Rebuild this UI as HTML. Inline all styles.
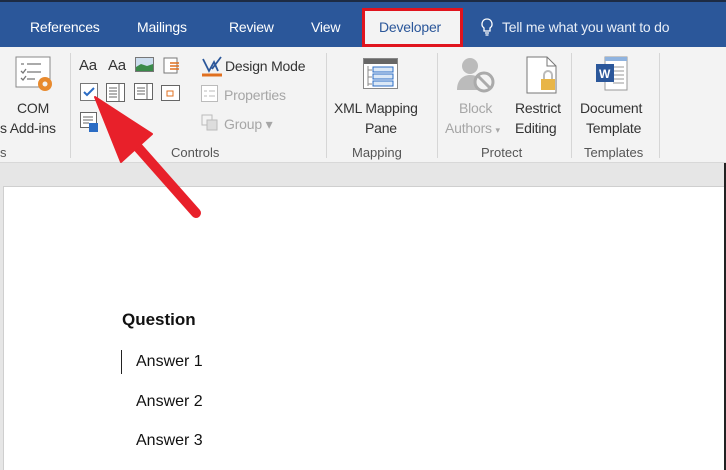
<!DOCTYPE html>
<html><head><meta charset="utf-8"><style>
*{margin:0;padding:0;box-sizing:border-box}
body{width:726px;height:470px;overflow:hidden;position:relative;background:#e6e6e6;font-family:"Liberation Sans",sans-serif}
.top{position:absolute;left:0;top:0;width:726px;height:47px;background:#2b579a;border-top:2px solid #1d2b44}
.tab{position:absolute;top:19px;color:#fff;font-size:14px;letter-spacing:-0.2px}
.rib{position:absolute;left:0;top:47px;width:726px;height:116px;background:#f3f3f3;border-bottom:1px solid #d8d8d8}
.t{position:absolute;font-size:14px;color:#333;white-space:nowrap;letter-spacing:-0.2px}
.g{color:#a6a6a6}
.lbl{position:absolute;top:145px;font-size:13px;color:#555}
.sep{position:absolute;top:53px;width:1px;height:105px;background:#d6d6d6}
.page{position:absolute;left:3px;top:186px;width:721px;height:284px;background:#fff;border-left:1px solid #cfcfcf;border-top:1px solid #cfcfcf}
.rb{position:absolute;right:0;top:163px;width:2px;height:307px;background:#222}
.doc{position:absolute;font-size:16px;color:#111}
</style></head><body>
<div class="top"></div>
<div class="tab" style="left:30px">References</div>
<div class="tab" style="left:137px">Mailings</div>
<div class="tab" style="left:229px">Review</div>
<div class="tab" style="left:311px">View</div>
<div style="position:absolute;left:362px;top:8px;width:101px;height:39px;border:3px solid #e0141e;background:#f3f3f3"></div>
<div class="tab" style="left:379px;color:#2b579a">Developer</div>
<svg style="position:absolute;left:480px;top:18px" width="14" height="18" viewBox="0 0 14 18"><path d="M7 1a5 5 0 0 0-3 9v3h6v-3a5 5 0 0 0-3-9zM5 15h4M5.5 17h3" fill="none" stroke="#fff" stroke-width="1.3"/></svg>
<div class="tab" style="left:502px;color:#e8eef7">Tell me what you want to do</div>
<div class="rib"></div>
<!-- COM add-ins -->
<svg style="position:absolute;left:15px;top:56px" width="42" height="40"><rect x="1" y="1" width="34" height="30" fill="#fff" stroke="#888"/><path d="M6 8h3M12 8h14M6 15l2 2 3-4M12 16h14M6 22l2 2 3-4M12 23h8" stroke="#777" stroke-width="1.3" fill="none"/><circle cx="30" cy="28" r="7" fill="#e88a2e"/><circle cx="30" cy="28" r="2.5" fill="#f3f3f3"/></svg>
<div class="t" style="left:17px;top:100px">COM</div>
<div class="t" style="left:0px;top:120px">s Add-ins</div>
<div class="lbl" style="left:0">s</div>
<div class="sep" style="left:70px"></div>
<!-- controls -->
<div class="t" style="left:79px;top:57px;font-size:15px">Aa</div>
<div class="t" style="left:108px;top:57px;font-size:15px">Aa</div>
<svg style="position:absolute;left:135px;top:57px" width="20" height="16"><rect x=".5" y=".5" width="18" height="14" fill="#cde" stroke="#777"/><path d="M1 10l5-3 6 2 6-2v7H1z" fill="#3a8a4a"/></svg>
<svg style="position:absolute;left:162px;top:55px" width="20" height="20"><rect x="2" y="3" width="13" height="15" fill="#fff" stroke="#777"/><path d="M8 8h9M8 11h9M8 14h9" stroke="#e07020" stroke-width="1.5"/></svg>
<svg style="position:absolute;left:80px;top:83px" width="20" height="20"><rect x=".5" y=".5" width="17" height="17" fill="#fff" stroke="#777"/><path d="M4 9l3 3 7-7" stroke="#2b6cc4" stroke-width="2" fill="none"/></svg>
<svg style="position:absolute;left:106px;top:83px" width="20" height="20"><rect x=".5" y=".5" width="18" height="18" fill="#fff" stroke="#666"/><path d="M3 5h8M3 8h8M3 11h8M3 14h8M13 1v18" stroke="#666"/></svg>
<svg style="position:absolute;left:134px;top:83px" width="20" height="20"><rect x=".5" y=".5" width="18" height="16" fill="#fff" stroke="#666"/><path d="M3 5h8M3 8h8M3 11h8M13 1v16" stroke="#666"/></svg>
<svg style="position:absolute;left:161px;top:83px" width="20" height="20"><rect x=".5" y="2.5" width="18" height="15" fill="#fff" stroke="#666"/><rect x="6" y="8" width="6" height="5" fill="none" stroke="#e07020"/></svg>
<svg style="position:absolute;left:80px;top:112px" width="20" height="22"><rect x=".5" y=".5" width="16" height="15" fill="#fff" stroke="#666"/><path d="M3 5h10M3 8h10M3 11h6" stroke="#666"/><rect x="9" y="11" width="9" height="9" fill="#2b6cc4"/></svg>
<svg style="position:absolute;left:200px;top:55px" width="24" height="22"><path d="M2 20h20" stroke="#e07020" stroke-width="3"/><path d="M3 4l6 12 5-9 4 9M12 14l9-12" stroke="#2b579a" stroke-width="1.8" fill="none"/></svg>
<div class="t" style="left:225px;top:58px">Design Mode</div>
<svg style="position:absolute;left:201px;top:85px" width="18" height="18"><rect x=".5" y=".5" width="16" height="16" fill="#fff" stroke="#bbb"/><path d="M3 6h3M8 6h6M3 11h3M8 11h6" stroke="#bbb"/></svg>
<div class="t g" style="left:224px;top:87px">Properties</div>
<svg style="position:absolute;left:200px;top:113px" width="20" height="20"><rect x="2" y="2" width="10" height="10" fill="none" stroke="#bbb"/><rect x="7" y="7" width="10" height="10" fill="#ddd" stroke="#bbb"/></svg>
<div class="t g" style="left:224px;top:116px">Group ▾</div>
<div class="lbl" style="left:171px">Controls</div>
<div class="sep" style="left:326px"></div>
<svg style="position:absolute;left:363px;top:58px" width="36" height="32"><rect x=".5" y=".5" width="34" height="30" fill="#fff" stroke="#888"/><rect x="1" y="1" width="33" height="5" fill="#666"/><path d="M5 8v20M5 12h4M5 19h4M5 26h4" stroke="#888"/><rect x="10" y="9" width="20" height="5" fill="#dbe8f6" stroke="#2b6cc4"/><rect x="10" y="16" width="20" height="5" fill="#dbe8f6" stroke="#2b6cc4"/><rect x="10" y="23" width="20" height="5" fill="#dbe8f6" stroke="#2b6cc4"/></svg>
<div class="t" style="left:334px;top:100px">XML Mapping</div>
<div class="t" style="left:365px;top:120px">Pane</div>
<div class="lbl" style="left:352px">Mapping</div>
<div class="sep" style="left:437px"></div>
<svg style="position:absolute;left:455px;top:55px" width="42" height="40"><circle cx="15" cy="11" r="8" fill="#bbb"/><path d="M2 35c0-12 8-15 13-15s10 2 12 6v9z" fill="#bbb"/><circle cx="29" cy="27" r="9" fill="#f3f3f3" stroke="#aaa" stroke-width="3"/><path d="M23 21l12 12" stroke="#aaa" stroke-width="3"/></svg>
<div class="t g" style="left:459px;top:100px">Block</div>
<div class="t g" style="left:445px;top:120px">Authors <span style="font-size:9px">▾</span></div>
<svg style="position:absolute;left:525px;top:56px" width="36" height="40"><path d="M2 1h20l9 9v27H2z" fill="#fff" stroke="#777"/><path d="M22 1v9h9" fill="none" stroke="#777"/><rect x="16" y="23" width="14" height="11" fill="#e8b547"/><path d="M19 23v-4a4 4 0 0 1 8 0v4" fill="none" stroke="#bbb" stroke-width="2"/></svg>
<div class="t" style="left:515px;top:100px">Restrict</div>
<div class="t" style="left:515px;top:120px">Editing</div>
<div class="lbl" style="left:481px">Protect</div>
<div class="sep" style="left:571px"></div>
<svg style="position:absolute;left:595px;top:56px" width="36" height="38"><rect x="10" y="1" width="22" height="33" fill="#fff" stroke="#999"/><rect x="10" y="1" width="22" height="4" fill="#8fb3df"/><path d="M18 11h11M18 15h11M18 19h11M18 23h11M18 27h11" stroke="#999"/><rect x="1" y="8" width="18" height="18" fill="#2b579a"/><text x="4" y="22" font-size="12" font-weight="bold" fill="#fff" font-family="Liberation Sans">W</text></svg>
<div class="t" style="left:580px;top:100px">Document</div>
<div class="t" style="left:586px;top:120px">Template</div>
<div class="lbl" style="left:584px">Templates</div>
<div class="sep" style="left:659px"></div>
<div class="page"></div>
<div class="rb"></div>
<div class="doc" style="left:122px;top:310px;font-weight:bold;font-size:17px">Question</div>
<div style="position:absolute;left:121px;top:350px;width:1px;height:24px;background:#222"></div>
<div class="doc" style="left:136px;top:353px">Answer 1</div>
<div class="doc" style="left:136px;top:393px">Answer 2</div>
<div class="doc" style="left:136px;top:432px">Answer 3</div>
<svg style="position:absolute;left:0;top:0" width="726" height="470"><path d="M135 144L196 213" stroke="#e8202a" stroke-width="10" stroke-linecap="round"/><path d="M95 97L121 162L152 134Z" fill="#e8202a" stroke="#e8202a" stroke-width="2" stroke-linejoin="round"/></svg>
</body></html>
